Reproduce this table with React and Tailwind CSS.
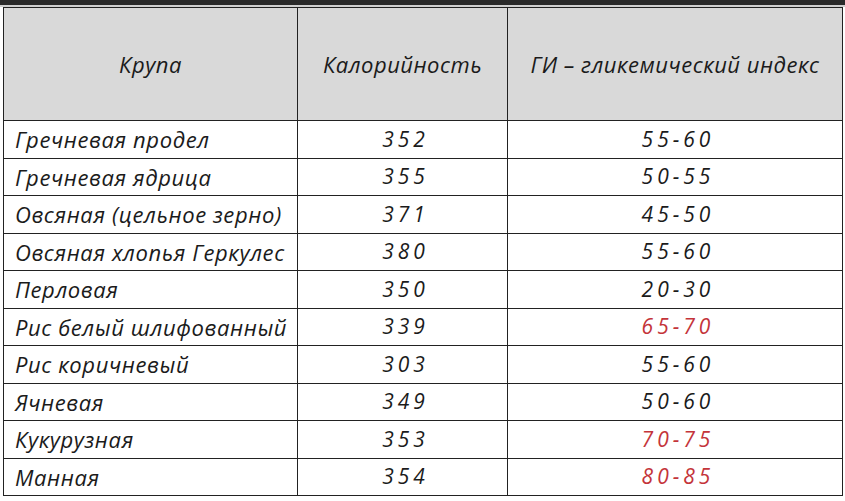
import React from 'react';

const rows = [
    ['Гречневая продел', '352', '55-60', false],
    ['Гречневая ядрица', '355', '50-55', false],
    ['Овсяная (цельное зерно)', '371', '45-50', false],
    ['Овсяная хлопья Геркулес', '380', '55-60', false],
    ['Перловая', '350', '20-30', false],
    ['Рис белый шлифованный', '339', '65-70', true],
    ['Рис коричневый', '303', '55-60', false],
    ['Ячневая', '349', '50-60', false],
    ['Кукурузная', '353', '70-75', true],
    ['Манная', '354', '80-85', true],
];

const App = () => {
    return (
        <div className="w-[845px] h-[501px] bg-white overflow-hidden" style={{ fontFamily: '"Open Sans", "Noto Sans", sans-serif' }}>
            {/* top dark strip */}
            <div className="h-[5px] bg-[#2a2a2a]" />
            <div className="h-[2px] bg-[#cfcfcf]" />

            <div className="pl-[3px] pr-[2px]">
                <table className="w-[840px] border-collapse table-fixed italic text-[#1b1b1b]">
                    <colgroup>
                        <col className="w-[294px]" />
                        <col className="w-[210px]" />
                        <col />
                    </colgroup>
                    <thead>
                        <tr className="h-[113px] bg-[#d9d9d9] text-[22px] tracking-[0.5px]">
                            <th className="border border-[#222] text-center font-medium">Крупа</th>
                            <th className="border border-[#222] text-center font-medium">Калорийность</th>
                            <th className="border border-[#222] text-center font-medium">ГИ – гликемический индекс</th>
                        </tr>
                    </thead>
                    <tbody>
                        {rows.map(([name, kcal, gi, red]) => (
                            <tr key={name} className="h-[37.5px] text-[21px]">
                                <td className="border border-[#222] pl-[11px] leading-none text-[22px] tracking-[0.6px] whitespace-nowrap">{name}</td>
                                <td className="border border-[#222] text-center leading-none tracking-[4px] pl-[6px]">{kcal}</td>
                                <td className={`border border-[#222] text-center leading-none tracking-[4px] pl-[6px] ${red ? 'text-[#c4343a]' : ''}`}>{gi}</td>
                            </tr>
                        ))}
                    </tbody>
                </table>
            </div>
        </div>
    );
};

export default App;
